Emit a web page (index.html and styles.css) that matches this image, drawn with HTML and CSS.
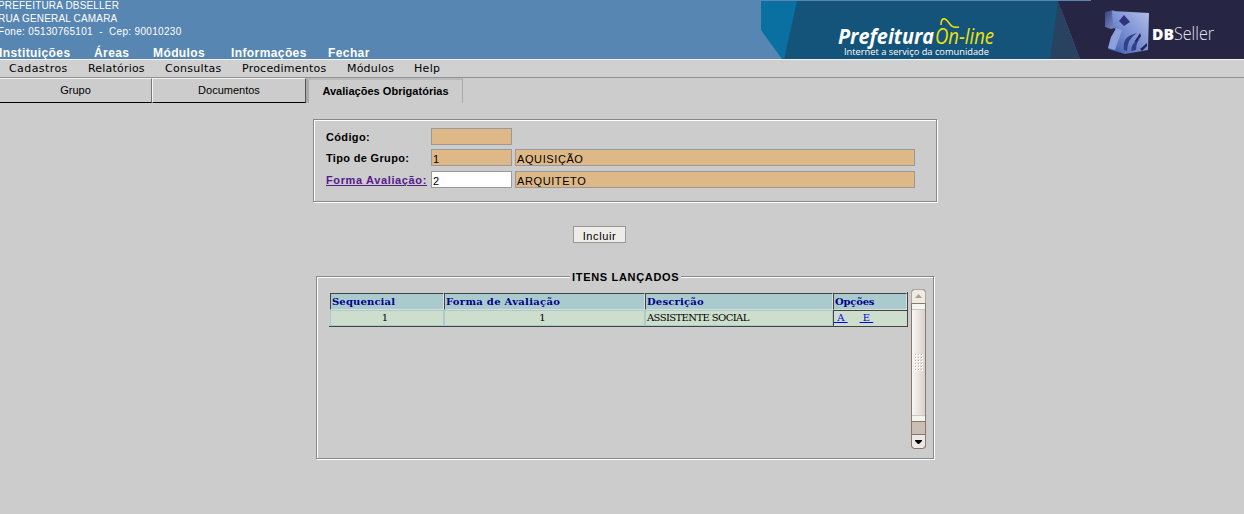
FILE: index.html
```html
<!DOCTYPE html>
<html lang="pt-BR">
<head>
<meta charset="utf-8">
<title>DBSeller - Prefeitura On-line</title>
<link rel="stylesheet" href="styles.css">
</head>
<body>
<header class="header">
  <div class="header-left">
    <div class="org"><div>PREFEITURA DBSELLER</div><div>RUA GENERAL CAMARA</div><div class="o3">Fone: 05130765101 &nbsp;- &nbsp;Cep: 90010230</div></div>
    <nav class="topnav"><a class="t1">Instituições</a><a class="t2">Áreas</a><a class="t3">Módulos</a><a class="t4">Informações</a><a class="t5">Fechar</a></nav>
  </div>
  <svg class="banner" width="483" height="59" viewBox="0 0 483 59">
    <defs>
      <linearGradient id="cube" x1="0" y1="1" x2="1" y2="0"><stop offset="0" stop-color="#3c55a6"/><stop offset=".45" stop-color="#758cd0"/><stop offset="1" stop-color="#b3bee8"/></linearGradient>
      <linearGradient id="side" x1="0" y1="0" x2="1" y2="1"><stop offset="0" stop-color="#39427c"/><stop offset="1" stop-color="#8395d2"/></linearGradient>
    </defs>
    <path fill="#0a70a1" d="M0 1H38L23 59H21L0 30Z"/>
    <path fill="#14547b" d="M36 1H300V59H23Z"/>
    <path fill="#28425f" d="M297 1L319 59H289Z"/>
    <path fill="#272544" d="M297 1H330V0H483V59H319Z"/>
    <text class="brand" x="77" y="44" textLength="96" lengthAdjust="spacingAndGlyphs">Prefeitura</text>
    <text class="online" x="174" y="44" textLength="59" lengthAdjust="spacingAndGlyphs">On-line</text>
    <path fill="none" stroke="#eee20b" stroke-width="1.5" d="M180 25Q180 18 184 19C189 21 188 29 198 27"/>
    <text class="slogan" x="83" y="55" textLength="145" lengthAdjust="spacingAndGlyphs">Internet a serviço da comunidade</text>
    <path fill="url(#side)" d="M344 12L352 10L356 12V27L350 29L344 27Z"/>
    <path fill="url(#cube)" d="M351 11L370 12L388 13L387 50L364 54L347 49L350 38L355 28L352 25Z"/>
    <path fill="#8ca0dc" d="M351 27L361 30L354 50L347 48L350 37L355 29Z"/>
    <path fill="#30317d" d="M358 21L363 15L369 22L363 26Z"/>
    <path fill="#30418a" d="M363 50Q361 37 373 34L376 33Q366 39 366 51ZM370 51Q370 43 378 39L381 36Q375 42 375 50Z"/>
    <path fill="#272650" d="M373 42Q376 38 379 33L380 36L376 41ZM379 49L386 43V46L381 51Z"/>
    <text class="db" x="391" y="40" textLength="22" lengthAdjust="spacingAndGlyphs">DB</text>
    <text class="seller" x="413" y="40" textLength="40" lengthAdjust="spacingAndGlyphs">Seller</text>
  </svg>
</header>
<nav class="menubar"><a class="m1">Cadastros</a><a class="m2">Relatórios</a><a class="m3">Consultas</a><a class="m4">Procedimentos</a><a class="m5">Módulos</a><a class="m6">Help</a></nav>
<div class="tabs">
  <div class="tab tab-first">Grupo</div>
  <div class="tab tab-second">Documentos</div>
  <div class="tab tab-active">Avaliações Obrigatórias</div>
</div>
<main>
  <section class="form">
    <div class="row"><label class="l1">Código:</label><div class="field code"></div></div>
    <div class="row"><label class="l2">Tipo de Grupo:</label><div class="field code">1</div><div class="field desc">AQUISIÇÃO</div></div>
    <div class="row"><label class="l3"><a class="visited">Forma Avaliação:</a></label><div class="field code editable">2</div><div class="field desc">ARQUITETO</div></div>
  </section>
  <button class="submit">Incluir</button>
  <fieldset class="items">
    <legend>ITENS LANÇADOS</legend>
    <div class="items-body">
      <div class="grid">
        <div class="th"><span class="h1">Sequencial</span></div><div class="th"><span class="h2">Forma de Avaliação</span></div><div class="th"><span class="h3">Descrição</span></div><div class="th"><span class="h4">Opções</span></div>
        <div class="td center">1</div><div class="td center">1</div><div class="td"><span class="c3">ASSISTENTE SOCIAL</span></div><div class="td options"><a>&nbsp;A&nbsp;</a><a>&nbsp;E&nbsp;</a></div>
      </div>
      <svg class="scrollbar" width="15" height="160" viewBox="0 0 15 160">
        <defs>
          <linearGradient id="thumb"><stop offset="0" stop-color="#faf8f6"/><stop offset="1" stop-color="#d9d0ca"/></linearGradient>
          <pattern id="grip" width="3" height="3" patternUnits="userSpaceOnUse" x="4" y="65"><path fill="#fff" d="M0 0H2V2H0Z"/><path fill="#b9afa7" d="M0 0H1V1H0Z"/></pattern>
        </defs>
        <rect x=".5" y=".5" width="14" height="159" rx="3" fill="#cabfb3" stroke="#86786b"/>
        <path fill="#edebe4" stroke="#b0a597" d="M.5 14V3L3 .5H12L14.5 3V14"/>
        <path fill="#aaa092" d="M4 9H11L7.500 5Z"/>
        <path fill="url(#thumb)" stroke="#86786b" d="M.5 14.500H14.500V132.500H.5Z"/>
        <path fill="none" stroke="#cbc5bd" d="M1 20.500H14M1 126.500H14"/>
        <path fill="#f6f4f0" d="M1 15H14V20H1ZM1 127H14V132H1Z"/>
        <rect x="4" y="65" width="8" height="17" fill="url(#grip)"/>
        <path fill="#eee9e6" stroke="#86786b" d="M.5 145.500H14.500V157L12 159.500H3L.5 157Z"/>
        <path fill="#000" d="M4 151H11V152L8 155H7L4 152Z"/>
      </svg>
    </div>
  </fieldset>
</main>
</body>
</html>
```
FILE: styles.css
```css
* { box-sizing: border-box; }
body { margin: 0; height: 514px; overflow: hidden; background: #ccc; color: #000; font: 11px "Liberation Sans", Arial, sans-serif; white-space: nowrap; }
.header { display: flex; height: 60px; background: #5786b2; border-bottom: 1px solid #f2f2f2; color: #fff; }
.header-left { width: 761px; }
.org { height: 48px; margin: -1px 0 0 -2px; font-size: 10px; line-height: 13px; letter-spacing: .17px; }
.o3 { letter-spacing: .32px; }
.topnav { display: flex; height: 12px; margin-left: -1px; font: bold 12px/12px "Liberation Sans", Arial, sans-serif; letter-spacing: .4px; }
.t1 { width: 95px; } .t2 { width: 59px; } .t3 { width: 78px; } .t4 { width: 97px; }
.banner { display: block; overflow: hidden; }
.brand { font: italic bold 21px "Open Sans", sans-serif; fill: #fff; }
.online { font: italic 21px "Open Sans", sans-serif; fill: #eee20b; }
.slogan { font: 9px "Open Sans", sans-serif; fill: #fff; }
.db { font: 800 16px "Open Sans", sans-serif; fill: #fff; }
.seller { font: 300 18px "Open Sans", sans-serif; fill: #e4e4ed; }
.menubar { display: flex; height: 18px; padding-left: 9px; background: #d0d0d0; border-bottom: 1px solid #919191; font: 11px/17px "DejaVu Sans", sans-serif; letter-spacing: .3px; }
.m1 { width: 79px; letter-spacing: .42px; } .m2 { width: 77px; letter-spacing: .2px; } .m3 { width: 77px; } .m4 { width: 105px; letter-spacing: .22px; } .m5 { width: 67px; letter-spacing: .2px; }
.tabs { display: flex; height: 25px; line-height: 23px; text-align: center; }
.tab { border-top: 1px solid #f0f0f0; }
.tab-first { width: 152px; border-right: 1px solid #777; border-bottom: 1px solid #000; }
.tab-second { width: 154px; border-left: 1px solid #f5f5f5; border-right: 1px solid #555; border-bottom: 1px solid #000; }
.tab-active { width: 157px; border-left: 3px solid #aaa; border-top: 2px solid #bababa; border-right: 1px solid #aaa; font-weight: bold; letter-spacing: .03px; }
main { display: flex; flex-direction: column; }
.form { width: 624px; height: 83px; margin: 16px 0 0 313px; padding: 8px 0 0 12px; border: 1px solid #888; box-shadow: inset 1px 1px #fff, 1px 1px #fff; }
.row { display: flex; height: 17px; margin-bottom: 4px; line-height: 18px; }
.row + .row { margin-bottom: 5px; }
.row label { width: 105px; font-weight: bold; }
.l1 { letter-spacing: .35px; } .l2 { letter-spacing: .33px; } .l3 { letter-spacing: .63px; }
.visited { color: #551a8b; text-decoration: underline; }
.field { height: 17px; border: 1px solid #999; background: #deb887; padding-left: 1px; line-height: 18px; }
.code { width: 81px; margin-right: 3px; }
.desc { width: 400px; letter-spacing: .6px; }
.editable { background: #fff; }
.submit { width: 53px; height: 17px; margin: 24px 0 0 573px; padding: 2px 0 0; border: 1px solid #999; background: #efebe7; color: #000; font: 11px/14px "Liberation Sans", Arial, sans-serif; letter-spacing: .6px; }
.items { width: 618px; height: 189px; margin: 27px 0 0 316px; padding: 0; border: 1px solid #888; box-shadow: inset 1px 1px #fff, 1px 1px #fff; }
.items legend { height: 13px; margin-left: 253px; padding: 0 2px; background: #ccc; font: bold 11px/14px "Liberation Sans", Arial, sans-serif; letter-spacing: .68px; }
.items-body { display: flex; padding: 6px 0 0 12px; }
.grid { display: grid; grid-template: 17px 16px / 114px 201px 188px 74px; width: 579px; height: 35px; margin-top: 3px; padding: 1px 0 0 1px; border-bottom: 1px solid #444; border-right: 1px solid #444; font: 10px/15px "DejaVu Serif", serif; }
.th { padding-left: 1px; border: 1px solid #ddd; border-top-color: #444; border-left-color: #444; background: #a9cbcd; color: #00008b; font-weight: bold; }
.h1 { letter-spacing: .15px; } .h2 { letter-spacing: .3px; } .h3 { letter-spacing: .2px; } .h4 { letter-spacing: -.2px; }
.td { padding-left: 1px; background: #cedecd; border: 1px solid #a9cbcd; line-height: 14px; }
.c3 { letter-spacing: -.6px; }
.center { padding-right: 5px; text-align: center; }
.options { padding-left: 0; border: 0; border-top: 1px solid #444; border-left: 1px solid #444; color: #00e; }
.options a { text-decoration: underline; margin-right: 12px; }
.scrollbar { display: block; margin-left: 3px; }
```
